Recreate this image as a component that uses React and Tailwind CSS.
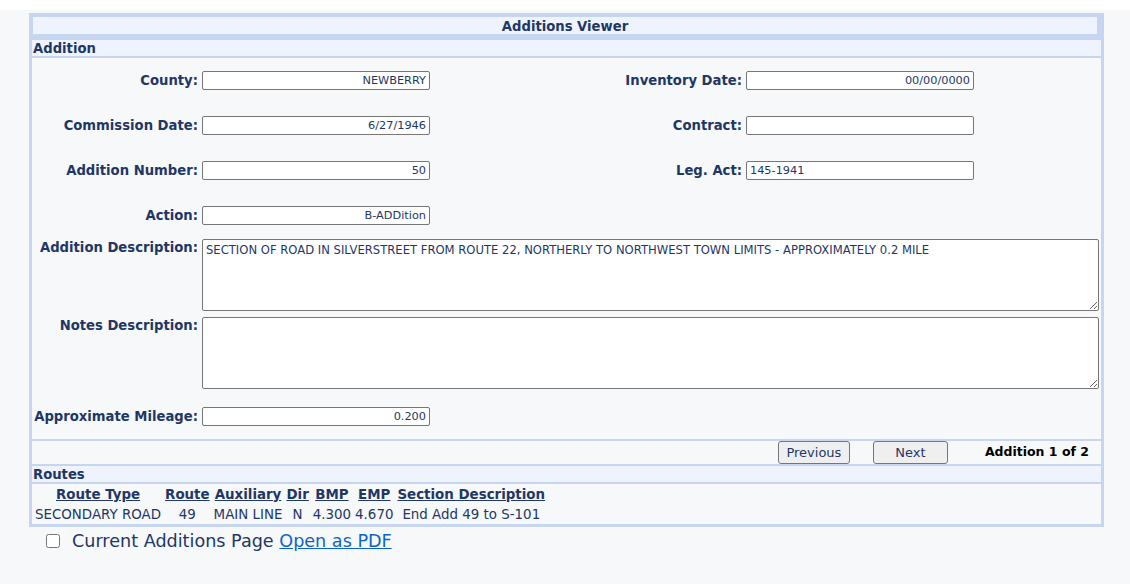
import React from 'react';

const navy = 'text-[#1e3764]';

const Field = ({ label, value, align = 'text-right' }) => (
  <>
    <div className={`pr-[4px] text-right text-[13.2px] font-bold leading-[19px] ${navy}`}>{label}</div>
    <input
      readOnly
      value={value}
      className={`box-border h-[19px] w-[228px] rounded-[2px] border border-[#767676] bg-white px-[3px] text-[11.3px] ${align} ${navy} outline-none`}
    />
  </>
);

const TextField = ({ label, value }) => (
  <div className="grid grid-cols-[170px_1fr]">
    <div className={`pr-[4px] pt-[1px] text-right text-[13.2px] font-bold leading-[16px] ${navy}`}>{label}</div>
    <textarea
      readOnly
      defaultValue={value}
      className={`mr-[2px] box-border block h-[72px] rounded-[2px] border border-[#767676] bg-white px-[3px] pt-[3px] text-[11.6px] leading-[14px] ${navy} outline-none`}
    />
  </div>
);

const routes = [
  { type: 'SECONDARY ROAD', route: '49', aux: 'MAIN LINE', dir: 'N', bmp: '4.300', emp: '4.670', desc: 'End Add 49 to S-101' },
];

export default function App() {
  return (
    <div className="min-h-[584px] bg-[#f7f8fa]" style={{ fontFamily: '"DejaVu Sans", Verdana, sans-serif' }}>
      <div className="h-[10px] bg-white" />
      <div className="ml-[29px] mt-[3px] w-[1075px] border-[3px] border-[#c6d6f1] bg-[#c6d6f1]">
        {/* title */}
        <div className="pl-[1px] pr-[4px] pt-[1px] pb-[6px]">
          <div className={`h-[17px] bg-[#eef3fd] pt-[1px] text-center text-[13.2px] font-bold leading-[17px] ${navy}`}>
            Additions Viewer
          </div>
        </div>

        <div className={`h-[16px] bg-[#eef3fd] pl-[1px] pt-[1px] text-[13.2px] font-bold leading-[16px] ${navy}`}>Addition</div>

        {/* form */}
        <div className="mt-[2px] bg-[#f7f8fa] pt-[13px] pb-[13px]">
          <div className="grid grid-cols-[170px_228px_316px_228px_1fr] gap-y-[26px]">
            <Field label="County:" value="NEWBERRY" />
            <Field label="Inventory Date:" value="00/00/0000" />
            <div />
            <Field label="Commission Date:" value="6/27/1946" />
            <Field label="Contract:" value="" />
            <div />
            <Field label="Addition Number:" value="50" />
            <Field label="Leg. Act:" value="145-1941" align="text-left" />
            <div />
            <Field label="Action:" value="B-ADDition" />
            <div />
            <div />
            <div />
          </div>
          <div className="mt-[14px]">
            <TextField
              label="Addition Description:"
              value="SECTION OF ROAD IN SILVERSTREET FROM ROUTE 22, NORTHERLY TO NORTHWEST TOWN LIMITS - APPROXIMATELY 0.2 MILE"
            />
          </div>
          <div className="mt-[6px]">
            <TextField label="Notes Description:" value="" />
          </div>
          <div className="mt-[18px] grid grid-cols-[170px_228px_1fr]">
            <Field label="Approximate Mileage:" value="0.200" />
          </div>
        </div>

        {/* pager */}
        <div className="mt-[2px] flex h-[23px] items-center justify-end bg-[#f7f8fa] pr-[12px]">
          <button className={`box-border h-[23px] w-[72px] rounded-[3px] border border-[#767676] bg-[#efefef] text-[13px] ${navy}`}>
            Previous
          </button>
          <button className={`ml-[23px] box-border h-[23px] w-[75px] rounded-[3px] border border-[#767676] bg-[#efefef] text-[13px] ${navy}`}>
            Next
          </button>
          <span className="ml-[37px] text-[12.5px] font-bold text-black">Addition 1 of 2</span>
        </div>

        <div className={`mt-[2px] h-[16px] bg-[#eef3fd] pl-[1px] pt-[1px] text-[13.2px] font-bold leading-[16px] ${navy}`}>Routes</div>

        {/* routes */}
        <div className="mt-[2px] h-[40px] bg-[#f7f8fa]">
          <table className={`border-separate border-spacing-[2px] text-[13.4px] ${navy}`}>
            <thead>
              <tr>
                {['Route Type', 'Route', 'Auxiliary', 'Dir', 'BMP', 'EMP', 'Section Description'].map((h) => (
                  <th key={h} className="px-[1px] py-[1px] text-center font-bold leading-[16px] underline">
                    {h}
                  </th>
                ))}
              </tr>
            </thead>
            <tbody>
              {routes.map((r) => (
                <tr key={r.route}>
                  <td className="px-[1px] py-[1px] text-center leading-[16px]">{r.type}</td>
                  <td className="px-[1px] py-[1px] text-center leading-[16px]">{r.route}</td>
                  <td className="px-[1px] py-[1px] text-center leading-[16px]">{r.aux}</td>
                  <td className="px-[1px] py-[1px] text-center leading-[16px]">{r.dir}</td>
                  <td className="px-[1px] py-[1px] text-center leading-[16px]">{r.bmp}</td>
                  <td className="px-[1px] py-[1px] text-center leading-[16px]">{r.emp}</td>
                  <td className="px-[1px] py-[1px] text-center leading-[16px]">{r.desc}</td>
                </tr>
              ))}
            </tbody>
          </table>
        </div>
      </div>

      <div className="ml-[46px] mt-[3px] flex items-center">
        <input type="checkbox" className="h-[14px] w-[14px]" />
        <span className={`ml-[12px] text-[17.6px] leading-[22px] ${navy}`}>
          Current Additions Page{' '}
          <a href="#" className="text-[#0a66cc] underline">
            Open as PDF
          </a>
        </span>
      </div>
    </div>
  );
}
